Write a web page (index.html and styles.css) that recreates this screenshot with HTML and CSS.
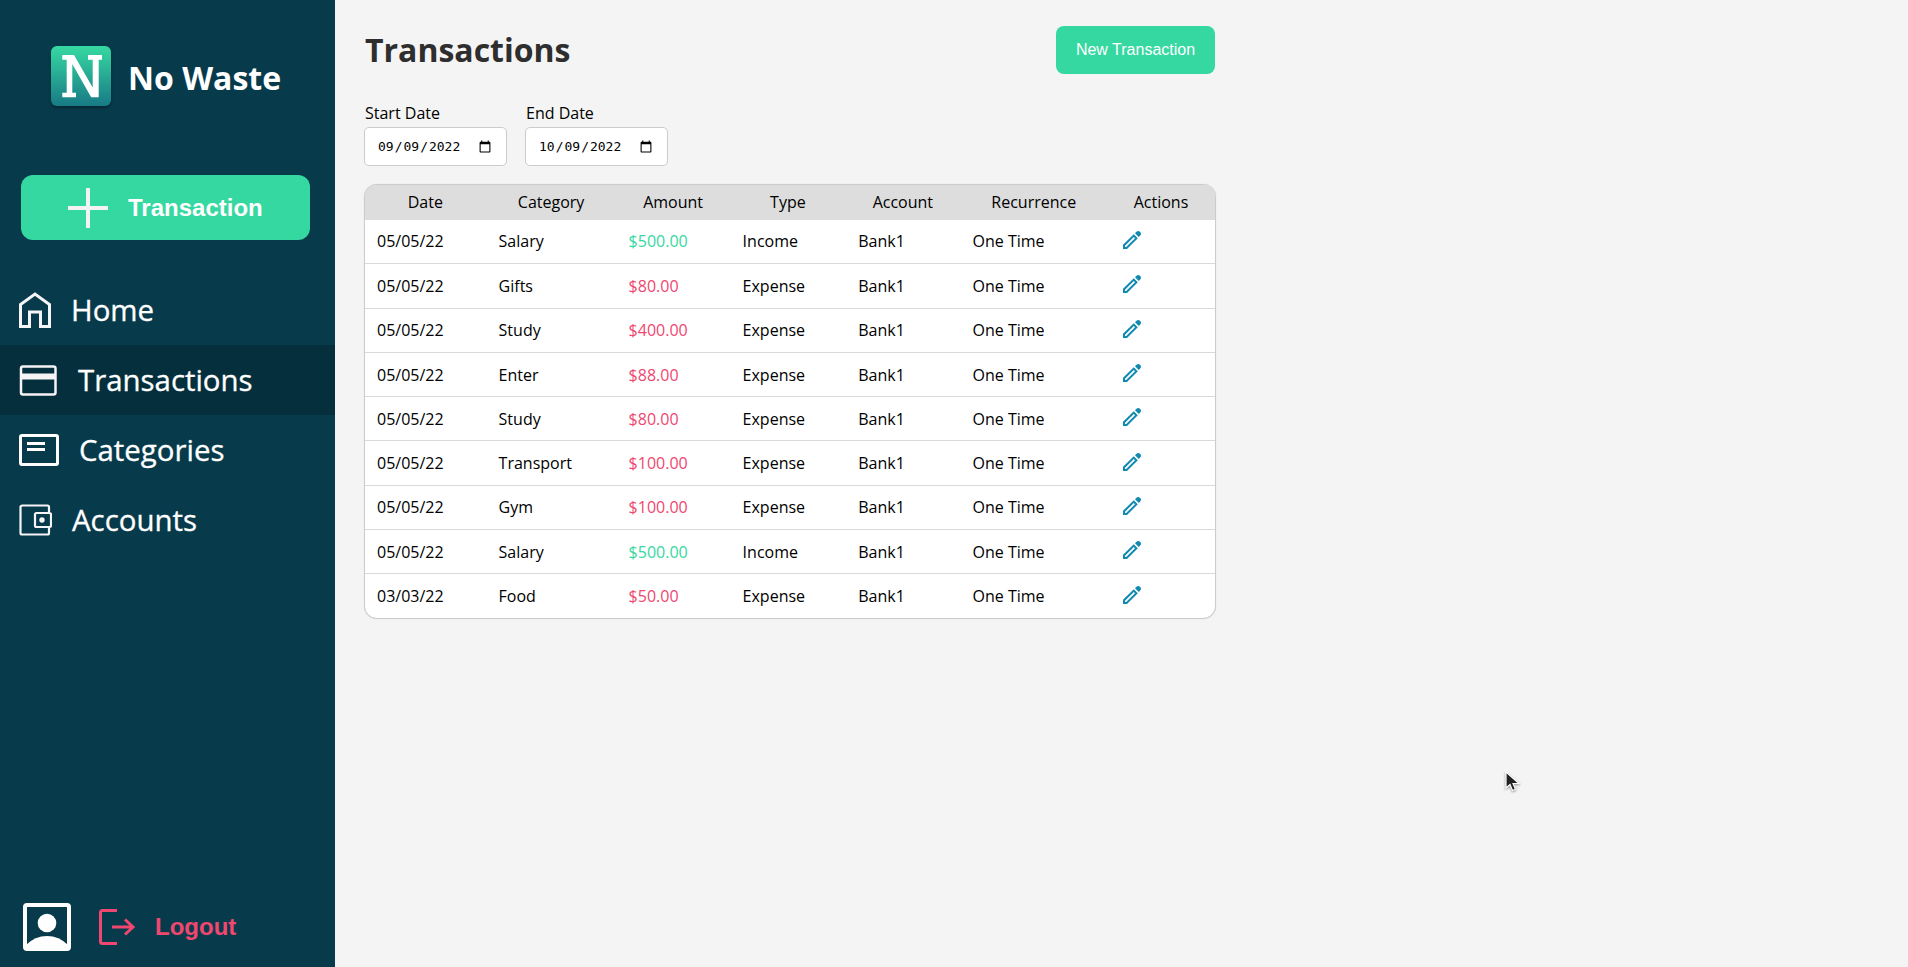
FILE: index.html
```html
<!DOCTYPE html>
<html lang="en">
<head>
<meta charset="utf-8">
<title>No Waste</title>
<link rel="stylesheet" href="styles.css">
</head>
<body>
<svg class="defs" width="0" height="0">
  <symbol id="pencil" viewBox="0 0 18 18">
    <path fill-rule="evenodd" d="M0 13.800 10.800 3.200 14.800 7.200 4 18H0zM2 14.700V16h1.200L12 7.200 10.800 6z"/>
    <path d="M12 2.200 13.500.8Q14.600-.3 16.200.2 17.800.9 18 2.500 18.100 3.500 17.200 4.500L15.800 6z"/>
  </symbol>
</svg>
<div class="app">
  <aside class="sidebar">
    <div class="brand">
      <div class="logo">
        <svg width="60" height="60" viewBox="0 0 60 60" fill="#fff"><path d="M11.300 9H23l18.700 32.500V13.700H37V9h14v4.700h-3.300v37.600h-7.500L21.300 18v28.700H25v4.600H11.300v-4.600h4.400v-33h-4.400z"/></svg>
      </div>
      <span class="brand-name">No Waste</span>
    </div>
    <button class="add">
      <svg width="40" height="40" viewBox="0 0 40 40" fill="#f3f3f3"><path d="M18 0h4v18h18v4H22v18h-4V22H0v-4h18z"/></svg>
      <span>Transaction</span>
    </button>
    <nav class="nav">
      <a class="item"><svg width="32" height="36" viewBox="0 0 32 36" fill="none" stroke="#f6f4f6" stroke-width="3"><path d="M1.500 34.500V12.500L16 2l14.500 10.500v22H21.500V20h-11v14.500z"/></svg><span>Home</span></a>
      <a class="item active"><svg width="39" height="32" viewBox="0 0 39 32"><rect x="2" y="2.500" width="34.500" height="28" rx="2" fill="none" stroke="#f6f4f6" stroke-width="2.500"/><path fill="#f6f4f6" d="M2 9.500h35v6H2z"/></svg><span>Transactions</span></a>
      <a class="item"><svg width="40" height="32" viewBox="0 0 40 32" fill="none" stroke="#fff"><rect x="1.500" y="1.500" width="37" height="29" rx="1.500" stroke-width="3"/><path stroke-width="3" d="M8 9.500h18M8 15.500h18"/></svg><span>Categories</span></a>
      <a class="item"><svg width="33" height="32" viewBox="0 0 33 32" fill="none" stroke="#f6f4f6" stroke-width="2.200"><path d="M30 8V3q0-1.500-1.500-1.500h-25Q1.500 1.500 1.500 3v26q0 1.500 1.500 1.500h25.500q1.500 0 1.500-1.500v-5"/><rect x="16" y="9" width="16" height="14" rx="1.500"/><circle cx="23" cy="16" r="2.700" fill="#f6f4f6" stroke="none"/></svg><span>Accounts</span></a>
    </nav>
    <div class="user">
      <svg width="48" height="48" viewBox="0 0 48 48"><rect x="2" y="2" width="44" height="44" rx="2" fill="none" stroke="#fff" stroke-width="4"/><circle cx="24" cy="20" r="9.300" fill="#fff"/><path fill="#fff" d="M3 42q9-9 21-9t21 9v4H3z"/></svg>
      <button class="logout">
        <svg width="37" height="36" viewBox="0 0 37 36" fill="none" stroke="#ef476f" stroke-width="3"><path d="M18 1.500H3.500q-2 0-2 2v29q0 2 2 2H18M13 18h21M26 10.500l8 7.500-8 7.500"/></svg>
        <span>Logout</span>
      </button>
    </div>
  </aside>
  <main class="main">
    <header class="head"><h1>Transactions</h1><button class="new">New Transaction</button></header>
    <div class="filters">
      <label><span>Start Date</span><input type="date" value="2022-09-09"></label>
      <label><span>End Date</span><input type="date" value="2022-10-09"></label>
    </div>
    <div class="card">
      <table>
        <colgroup><col class="c1"><col class="c2"><col class="c3"><col class="c4"><col class="c5"><col class="c6"><col class="c7"></colgroup>
        <thead><tr><th>Date</th><th>Category</th><th>Amount</th><th>Type</th><th>Account</th><th>Recurrence</th><th>Actions</th></tr></thead>
        <tbody>
          <tr><td>05/05/22</td><td>Salary</td><td class="in">$500.00</td><td>Income</td><td>Bank1</td><td>One Time</td><td><svg class="edit"><use href="#pencil"/></svg></td></tr>
          <tr><td>05/05/22</td><td>Gifts</td><td class="out">$80.00</td><td>Expense</td><td>Bank1</td><td>One Time</td><td><svg class="edit"><use href="#pencil"/></svg></td></tr>
          <tr><td>05/05/22</td><td>Study</td><td class="out">$400.00</td><td>Expense</td><td>Bank1</td><td>One Time</td><td><svg class="edit"><use href="#pencil"/></svg></td></tr>
          <tr><td>05/05/22</td><td>Enter</td><td class="out">$88.00</td><td>Expense</td><td>Bank1</td><td>One Time</td><td><svg class="edit"><use href="#pencil"/></svg></td></tr>
          <tr><td>05/05/22</td><td>Study</td><td class="out">$80.00</td><td>Expense</td><td>Bank1</td><td>One Time</td><td><svg class="edit"><use href="#pencil"/></svg></td></tr>
          <tr><td>05/05/22</td><td>Transport</td><td class="out">$100.00</td><td>Expense</td><td>Bank1</td><td>One Time</td><td><svg class="edit"><use href="#pencil"/></svg></td></tr>
          <tr><td>05/05/22</td><td>Gym</td><td class="out">$100.00</td><td>Expense</td><td>Bank1</td><td>One Time</td><td><svg class="edit"><use href="#pencil"/></svg></td></tr>
          <tr><td>05/05/22</td><td>Salary</td><td class="in">$500.00</td><td>Income</td><td>Bank1</td><td>One Time</td><td><svg class="edit"><use href="#pencil"/></svg></td></tr>
          <tr><td>03/03/22</td><td>Food</td><td class="out">$50.00</td><td>Expense</td><td>Bank1</td><td>One Time</td><td><svg class="edit"><use href="#pencil"/></svg></td></tr>
        </tbody>
      </table>
    </div>
  </main>
</div>
<svg class="cursor" width="16" height="22" viewBox="0 0 16 22"><path d="M1 1v16l4-3.500 2.500 6 3-1.300L8 12.500h6z" fill="#222" stroke="#fff" stroke-width="1.200"/></svg>
</body>
</html>
```
FILE: styles.css
```css
* { box-sizing: border-box; }
body { margin: 0; font-family: "Open Sans", sans-serif; font-size: 16px; color: #000; background: #f4f4f4; }
.defs { position: absolute; }
button { border: 0; margin: 0; font-family: "Liberation Sans", Arial, sans-serif; }
.app { display: flex; height: 967px; overflow: hidden; }
.sidebar { width: 335px; flex: none; background: #073b4c; color: #fff; display: flex; flex-direction: column; }
.brand { display: flex; align-items: center; height: 60px; margin: 46px 0 0 51px; gap: 17px; }
.logo { width: 60px; height: 60px; border-radius: 6px; background: linear-gradient(#37d9a2, #187a85); box-shadow: 0 2px 3px rgba(0,0,0,.35); }
.brand-name { font-size: 32px; font-weight: 700; line-height: 44px; padding-top: 3px; }
.add { width: 289px; height: 65px; margin: 69px 0 0 21px; padding: 0 0 0 47px; border-radius: 12px; background: #35d8a1; color: #fff; display: flex; align-items: center; gap: 20px; font-size: 24px; font-weight: 700; }
.nav { margin-top: 35px; font-size: 28.800px; font-weight: 500; }
.item { display: flex; align-items: center; height: 70px; padding-left: 19px; gap: 20px; }
.item span { padding-bottom: 1px; font-size: 29.400px; line-height: 40px; -webkit-text-stroke: .3px #fff; }
.item.active { background: #052f3d; }
.user { display: flex; align-items: center; margin: auto 0 16px 23px; gap: 28px; }
.logout { display: flex; align-items: center; gap: 19px; padding: 0; background: none; color: #ef476f; font-size: 24px; font-weight: 700; }
.main { width: 851px; margin-left: 29px; padding-top: 26px; }
.head { display: flex; justify-content: space-between; height: 48px; }
h1 { margin: 2px 0 0 1px; font-size: 32px; line-height: 44px; font-weight: 700; color: #2e2e2e; }
.new { width: 159px; height: 48px; border-radius: 8px; background: #35d8a1; color: #fff; font-size: 16px; }
.filters { display: flex; gap: 18px; margin-top: 28px; }
label { display: flex; flex-direction: column; gap: 3px; line-height: 22px; }
label span { padding-left: 1px; }
input { width: 143px; height: 39px; padding: 0 12px; border: 1px solid #ccc; border-radius: 5px; background: #fff; font: 13px "DejaVu Sans Mono", monospace; color: #000; }
input::-webkit-calendar-picker-indicator { font-size: 14px; }
.card { margin-top: 18px; border: 1px solid #ccc; border-radius: 13px; overflow: hidden; background: #fff; width: 852px; box-shadow: 0 0 1px #ccc; }
table { width: 850px; border-collapse: separate; border-spacing: 0; table-layout: fixed; }
.c1 { width: 121.600px; }
.c2 { width: 130px; }
.c3 { width: 114px; }
.c4 { width: 115.600px; }
.c5 { width: 114.300px; }
.c6 { width: 147.500px; }
.c7 { width: 107px; }
th { height: 35px; padding: 0 1px 2px 0; background: #ddd; font-weight: 400; }
td { height: 44.300px; padding: 0 12px; border-bottom: 1px solid #d9d9d9; }
tbody tr:first-child td { padding-bottom: 1px; }
tbody tr:last-child td { border-bottom: 0; height: 43.300px; }
.in { color: #35d8a1; }
.out { color: #ef476f; }
.edit { display: block; width: 18px; height: 18px; margin: -3px 0 0 3px; fill: #118ab2; overflow: visible; }
.cursor { position: absolute; left: 1505px; top: 771px; filter: drop-shadow(0 1px 1px rgba(0,0,0,.4)); }
```
